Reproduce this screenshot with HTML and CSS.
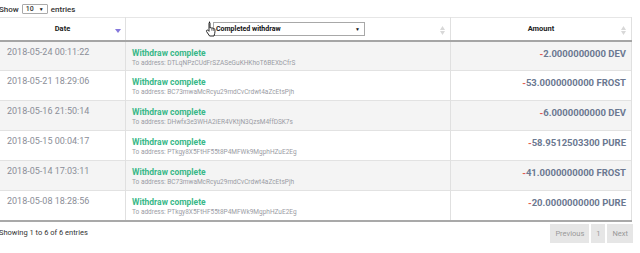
FILE: index.html
```html
<!DOCTYPE html>
<html lang="en">
<head>
    <meta charset="UTF-8">
    <meta name="viewport" content="width=device-width, initial-scale=1.0">
    <title>Withdraw history</title>
    <link rel="stylesheet" href="styles.css">
</head>
<body>
    <div class="wrapper">
        <!-- Length selector -->
        <div class="length">
            Show
            <span class="mini-select">10 <span class="caret">&#9660;</span></span>
            entries
        </div>

        <table class="history">
            <thead>
                <tr>
                    <th class="col-date">
                        Date
                        <svg class="sort-active" width="6" height="4" viewBox="0 0 6 4"><path d="M0 0h6L3 4z" fill="#8578dc"/></svg>
                    </th>
                    <th class="col-desc">
                        <span class="filter">
                            <span class="filter-text">Completed withdraw</span>
                            <span class="caret">&#9660;</span>
                        </span>
                        <svg class="sort" width="5" height="9" viewBox="0 0 5 9"><path d="M0 4L2.5 0 5 4z M0 5h5L2.5 9z" fill="#d8d8d8"/></svg>
                        <svg class="cursor" width="13" height="16" viewBox="0 0 13 16">
                            <path d="M4 1.2c.6 0 1 .4 1 1V7l.2-.1c.5-.5 1.4-.3 1.6.3.5-.4 1.3-.2 1.5.4.5-.3 1.3-.1 1.5.6.3 1 .3 3-.1 4.3L9 15H4.6L1.6 10.6c-.4-.6-.2-1.3.4-1.5.4-.2.9 0 1.2.3l.8.9V2.2c0-.6.4-1 1-1z" fill="#fff" stroke="#111" stroke-width="0.9" stroke-linejoin="round"/>
                            <path d="M6.8 7.3v2.4M8.3 7.7v2.2" stroke="#111" stroke-width="0.6"/>
                        </svg>
                    </th>
                    <th class="col-amount">
                        Amount
                        <svg class="sort" width="5" height="9" viewBox="0 0 5 9"><path d="M0 4L2.5 0 5 4z M0 5h5L2.5 9z" fill="#d8d8d8"/></svg>
                    </th>
                </tr>
            </thead>
            <tbody>
                <tr>
                    <td class="date">2018-05-24 00:11:22</td>
                    <td class="desc"><div class="status">Withdraw complete</div><div class="address">To address: DTLqNPzCUdFrSZASeGuKHKhoT6BEXbCfrS</div></td>
                    <td class="amount"><span class="minus">-</span>2.0000000000 DEV</td>
                </tr>
                <tr>
                    <td class="date">2018-05-21 18:29:06</td>
                    <td class="desc"><div class="status">Withdraw complete</div><div class="address">To address: BC73mwaMcRcyu29mdCvCrdwt4aZcEtsPjh</div></td>
                    <td class="amount"><span class="minus">-</span>53.0000000000 FROST</td>
                </tr>
                <tr>
                    <td class="date">2018-05-16 21:50:14</td>
                    <td class="desc"><div class="status">Withdraw complete</div><div class="address">To address: DHwfx3e3WHA2iER4VKtjN3QzsM4ffDSK7s</div></td>
                    <td class="amount"><span class="minus">-</span>6.0000000000 DEV</td>
                </tr>
                <tr>
                    <td class="date">2018-05-15 00:04:17</td>
                    <td class="desc"><div class="status">Withdraw complete</div><div class="address">To address: PTkgy8X5FtHF55t8P4MFWk9MgphHZuE2Eg</div></td>
                    <td class="amount"><span class="minus">-</span>58.9512503300 PURE</td>
                </tr>
                <tr>
                    <td class="date">2018-05-14 17:03:11</td>
                    <td class="desc"><div class="status">Withdraw complete</div><div class="address">To address: BC73mwaMcRcyu29mdCvCrdwt4aZcEtsPjh</div></td>
                    <td class="amount"><span class="minus">-</span>41.0000000000 FROST</td>
                </tr>
                <tr>
                    <td class="date">2018-05-08 18:28:56</td>
                    <td class="desc"><div class="status">Withdraw complete</div><div class="address">To address: PTkgy8X5FtHF55t8P4MFWk9MgphHZuE2Eg</div></td>
                    <td class="amount"><span class="minus">-</span>20.0000000000 PURE</td>
                </tr>
            </tbody>
        </table>

        <div class="footer">
            <div class="info">Showing 1 to 6 of 6 entries</div>
            <div class="paging">
                <span class="page-btn">Previous</span>
                <span class="page-btn">1</span>
                <span class="page-btn">Next</span>
            </div>
        </div>
    </div>
</body>
</html>
```

FILE: styles.css
```css
* {
    box-sizing: border-box;
    margin: 0;
    padding: 0;
}

body {
    font-family: Roboto, "Liberation Sans", Arial, sans-serif;
    background: #fff;
    color: #333;
}

.wrapper {
    width: 634px;
    margin-left: -1px;
}

/* top "Show N entries" */
.length {
    display: flex;
    align-items: center;
    gap: 3px;
    height: 17px;
    padding-top: 1px;
    font-size: 8px;
    font-weight: 500;
    color: #333;
}

.mini-select {
    display: inline-flex;
    align-items: center;
    justify-content: space-between;
    width: 26px;
    height: 10px;
    padding: 0 3px;
    border: 1px solid #aaa;
    border-radius: 1px;
    font-size: 7px;
    background: #fff;
}

.caret {
    font-size: 5px;
    color: #111;
}

/* table */
.history {
    width: 632px;
    border-collapse: collapse;
    table-layout: fixed;
    border-top: 1px solid #e6e6e6;
    border-bottom: 2px solid #a9a9a9;
}

.history th,
.history td {
    border-left: 1px solid #e0e0e0;
    border-right: 1px solid #e0e0e0;
}

.history th {
    position: relative;
    height: 23px;
    font-size: 7.5px;
    font-weight: 700;
    color: #222;
    text-align: center;
    border-bottom: 2px solid #a5a5a5;
}

.col-date { width: 126px; }
.col-desc { width: 325px; }
.col-amount { width: 181px; }

.sort-active {
    position: absolute;
    right: 4px;
    top: 11px;
}

.sort {
    position: absolute;
    right: 5px;
    top: 8px;
}

.filter {
    display: inline-flex;
    align-items: center;
    justify-content: space-between;
    width: 152px;
    height: 14px;
    margin-left: 2px;
    padding: 0 4px 0 2px;
    border: 1px solid #a8a8a8;
    background: #fff;
    font-size: 7px;
    font-weight: 700;
    color: #111;
    vertical-align: middle;
}

.cursor {
    position: absolute;
    left: 79px;
    top: 3px;
}

.history tbody tr {
    height: 30px;
}

.history tbody tr:nth-child(odd) {
    background: #f4f4f4;
}

.history td {
    vertical-align: top;
    border-top: 1px solid #e2e2e2;
}

.date {
    padding: 4px 6px 0 7px;
    font-size: 9px;
    line-height: 12px;
    color: #8b8e98;
}

.desc {
    padding: 6px 6px 0 6px;
}

.status {
    font-size: 8.5px;
    font-weight: 700;
    color: #38b888;
    line-height: 11px;
}

.address {
    font-size: 6.5px;
    color: #9a9ca4;
    line-height: 9px;
}

.amount {
    padding: 6px 5px 0 6px;
    text-align: right;
    font-size: 9.5px;
    font-weight: 700;
    line-height: 11px;
    color: #6b7891;
}

.minus {
    color: #e2574c;
}

/* bottom bar */
.footer {
    display: flex;
    justify-content: space-between;
    align-items: flex-start;
    padding-top: 2px;
}

.info {
    padding-top: 4px;
    font-size: 7.5px;
    color: #333;
}

.paging {
    display: flex;
    gap: 2px;
}

.page-btn {
    display: inline-block;
    height: 19px;
    line-height: 19px;
    padding: 0 5px;
    background: #e6e6e6;
    font-size: 7.5px;
    color: #999;
}
```
